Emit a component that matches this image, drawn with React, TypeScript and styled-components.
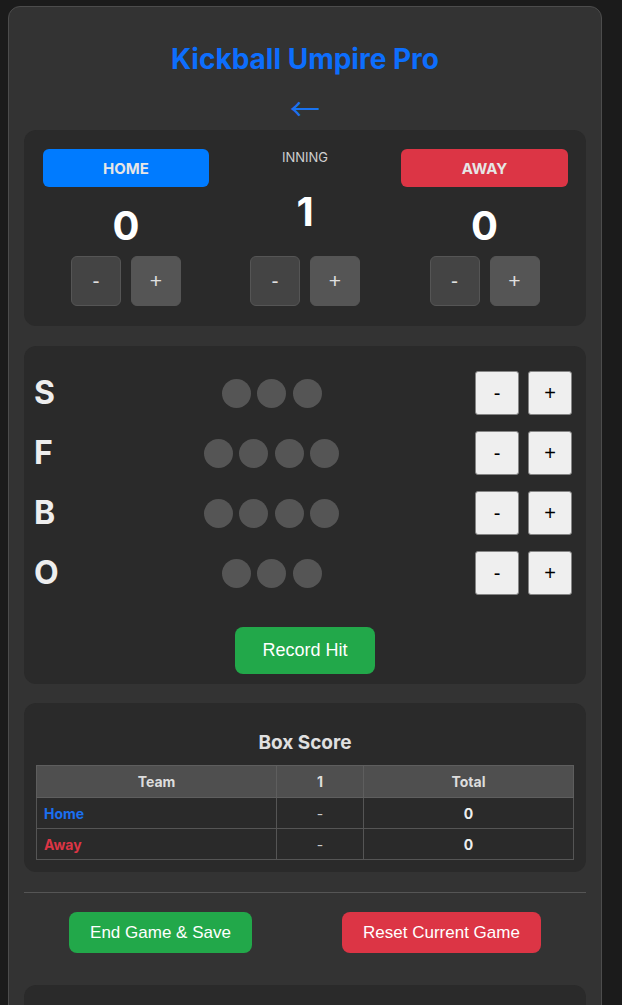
import React from "react"
import styled, { createGlobalStyle } from "styled-components"

const GlobalStyle = createGlobalStyle`
  html, body {
    margin: 0;
    padding: 0;
    background: #1b1b1b;
  }
  body {
    font-family: Inter, "Noto Sans", sans-serif;
    color: #e0e0e0;
  }
`

const Page = styled.div`
  padding: 6px 8px 0 8px;
`

const Container = styled.div`
  box-sizing: border-box;
  width: 594px;
  background: #333333;
  border: 1px solid #4c4c4c;
  border-radius: 12px;
  padding: 15px;
  display: flex;
  flex-direction: column;
`

const Title = styled.h1`
  margin: 20px 0 0 0;
  font-size: 28px;
  line-height: 34px;
  font-weight: 700;
  color: #0d6efd;
  text-align: center;
`

const BackArrow = styled.div`
  margin-top: 14px;
  font-family: "Noto Sans CJK SC", sans-serif;
  font-size: 30px;
  line-height: 34px;
  color: #1a73f0;
  text-align: center;
`

const Panel = styled.section`
  background: #2a2a2a;
  border-radius: 12px;
`

const ScorePanel = styled(Panel)`
  margin-top: 6px;
  padding: 19px 18px 20px 19px;
  display: grid;
  grid-template-columns: 166px 1fr 167px;
`

const Column = styled.div`
  display: flex;
  flex-direction: column;
  align-items: center;
`

const TeamBadge = styled.div<{ $color: string }>`
  width: 100%;
  height: 38px;
  border-radius: 6px;
  background: ${(p) => p.$color};
  color: #e6e6e6;
  font-size: 15px;
  font-weight: 700;
  display: flex;
  align-items: center;
  justify-content: center;
`

const InningLabel = styled.div`
  font-size: 13px;
  line-height: 16px;
  color: #cfcfcf;
`

const BigNumber = styled.div<{ $top: number }>`
  margin-top: ${(p) => p.$top}px;
  font-size: 40px;
  line-height: 48px;
  font-weight: 700;
  color: #ffffff;
`

const StepRow = styled.div<{ $top: number }>`
  margin-top: ${(p) => p.$top}px;
  display: flex;
  gap: 10px;
`

const DarkStep = styled.button<{ $light?: boolean }>`
  width: 50px;
  height: 50px;
  border-radius: 6px;
  border: 1px solid #555;
  background: ${(p) => (p.$light ? "#555555" : "#444444")};
  color: #e0e0e0;
  font-family: "Liberation Sans", Arial, sans-serif;
  font-size: 21px;
  padding: 0;
`

const CountPanel = styled(Panel)`
  margin-top: 20px;
  padding: 25px 14px 10px 10px;
  display: flex;
  flex-direction: column;
  align-items: center;
`

const CountRow = styled.div`
  width: 100%;
  display: grid;
  grid-template-columns: 34px 1fr auto;
  column-gap: 10px;
  align-items: center;
  height: 44px;
  & + & {
    margin-top: 16px;
  }
`

const CountLabel = styled.div`
  font-size: 32px;
  font-weight: 700;
  color: #eeeeee;
  line-height: 44px;
`

const Dots = styled.div`
  display: flex;
  justify-content: center;
  gap: 6.5px;
`

const Dot = styled.span`
  width: 29px;
  height: 29px;
  border-radius: 50%;
  background: #555555;
`

const LightSteps = styled.div`
  display: flex;
  gap: 9px;
`

const LightStep = styled.button`
  width: 44px;
  height: 44px;
  border: 1px solid #858585;
  border-radius: 3px;
  background: #efefef;
  color: #000;
  font-family: "Liberation Sans", Arial, sans-serif;
  font-size: 20px;
  padding: 0;
`

const ActionButton = styled.button<{ $color: string; $h: number; $fs: number }>`
  height: ${(p) => p.$h}px;
  padding: 0 21px;
  border: none;
  border-radius: 8px;
  background: ${(p) => p.$color};
  color: #ffffff;
  font-family: "Liberation Sans", Arial, sans-serif;
  font-size: ${(p) => p.$fs}px;
`

const RecordHit = styled(ActionButton)`
  margin: 32px 0 0 4px;
  width: 140px;
`

const BoxPanel = styled(Panel)`
  margin-top: 19px;
  padding: 29px 12px 12px 12px;
`

const BoxTitle = styled.h3`
  margin: 0 0 11px 0;
  font-size: 19px;
  line-height: 22px;
  font-weight: 700;
  color: #e0e0e0;
  text-align: center;
`

const Table = styled.table`
  width: 100%;
  border-collapse: collapse;
  table-layout: fixed;
  font-size: 14px;
`

const Th = styled.th<{ $w?: number }>`
  width: ${(p) => (p.$w ? `${p.$w}px` : "auto")};
  height: 31px;
  background: #4f4f4f;
  border: 1px solid #5e5e5e;
  color: #dddddd;
  font-weight: 700;
  padding: 0;
`

const Td = styled.td<{ $color?: string; $bold?: boolean; $left?: boolean }>`
  height: 30px;
  border: 1px solid #555555;
  color: ${(p) => p.$color ?? "#cccccc"};
  font-weight: ${(p) => (p.$bold ? 700 : 400)};
  text-align: ${(p) => (p.$left ? "left" : "center")};
  padding: 0 7px;
`

const Divider = styled.hr`
  margin: 20px 0 0 0;
  border: none;
  border-top: 1px solid #555555;
`

const Footer = styled.div`
  margin-top: 19px;
  display: flex;
  justify-content: space-around;
`

const HistoryPanel = styled(Panel)`
  margin-top: 32px;
  min-height: 140px;
`

const counts = [
  { label: "S", dots: 3 },
  { label: "F", dots: 4 },
  { label: "B", dots: 4 },
  { label: "O", dots: 3 },
]

export default function App() {
  return (
    <Page>
      <GlobalStyle />
      <Container>
        <Title>Kickball Umpire Pro</Title>
        <BackArrow>←</BackArrow>

        <ScorePanel>
          <Column>
            <TeamBadge $color="#007bff">HOME</TeamBadge>
            <BigNumber $top={15}>0</BigNumber>
            <StepRow $top={6}>
              <DarkStep>-</DarkStep>
              <DarkStep $light>+</DarkStep>
            </StepRow>
          </Column>
          <Column>
            <InningLabel>INNING</InningLabel>
            <BigNumber $top={23}>1</BigNumber>
            <StepRow $top={20}>
              <DarkStep>-</DarkStep>
              <DarkStep $light>+</DarkStep>
            </StepRow>
          </Column>
          <Column>
            <TeamBadge $color="#dc3545">AWAY</TeamBadge>
            <BigNumber $top={15}>0</BigNumber>
            <StepRow $top={6}>
              <DarkStep>-</DarkStep>
              <DarkStep $light>+</DarkStep>
            </StepRow>
          </Column>
        </ScorePanel>

        <CountPanel>
          {counts.map((c) => (
            <CountRow key={c.label}>
              <CountLabel>{c.label}</CountLabel>
              <Dots>
                {Array.from({ length: c.dots }).map((_, i) => (
                  <Dot key={i} />
                ))}
              </Dots>
              <LightSteps>
                <LightStep>-</LightStep>
                <LightStep>+</LightStep>
              </LightSteps>
            </CountRow>
          ))}
          <RecordHit $color="#22a84a" $h={47} $fs={18}>
            Record Hit
          </RecordHit>
        </CountPanel>

        <BoxPanel>
          <BoxTitle>Box Score</BoxTitle>
          <Table>
            <thead>
              <tr>
                <Th $w={239}>Team</Th>
                <Th $w={86}>1</Th>
                <Th>Total</Th>
              </tr>
            </thead>
            <tbody>
              <tr>
                <Td $left $bold $color="#1a6ff0">Home</Td>
                <Td>-</Td>
                <Td $bold $color="#eeeeee">0</Td>
              </tr>
              <tr>
                <Td $left $bold $color="#dc3545">Away</Td>
                <Td>-</Td>
                <Td $bold $color="#eeeeee">0</Td>
              </tr>
            </tbody>
          </Table>
        </BoxPanel>

        <Divider />

        <Footer>
          <ActionButton $color="#22a84a" $h={41} $fs={17}>
            End Game &amp; Save
          </ActionButton>
          <ActionButton $color="#dc3545" $h={41} $fs={17}>
            Reset Current Game
          </ActionButton>
        </Footer>

        <HistoryPanel />
      </Container>
    </Page>
  )
}
